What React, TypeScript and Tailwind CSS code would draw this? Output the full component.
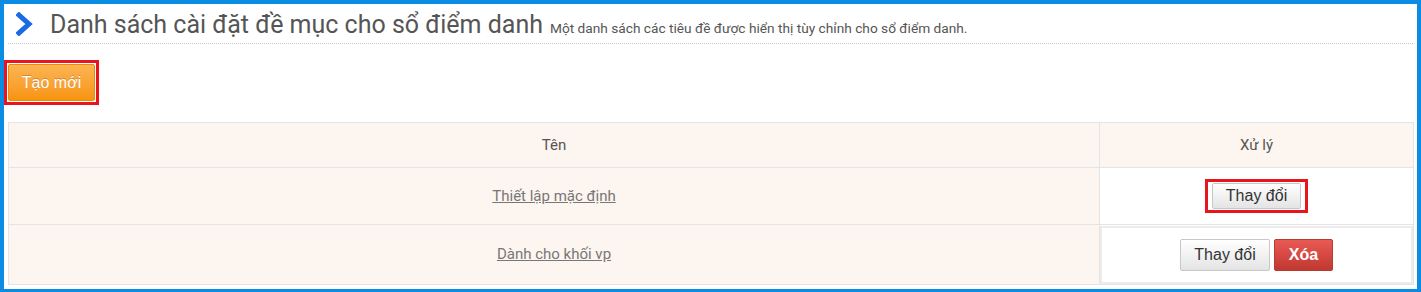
import React from 'react';

function Chevron() {
  return (
    <svg width="18" height="24" viewBox="0 0 18 24" className="shrink-0">
      <polyline points="3,3 13,12 3,21" fill="none" stroke="#1a6ae6" strokeWidth="5" strokeLinecap="square" strokeLinejoin="miter" />
    </svg>
  );
}

const grayBtn =
  'whitespace-nowrap px-0 border border-[#c8c8c8] rounded-[2px] bg-gradient-to-b from-white to-[#e4e4e4] text-[#333] text-[16px] font-["Liberation_Sans",Arial,sans-serif] shadow-[inset_0_1px_0_rgba(255,255,255,0.6)]';

export default function App() {
  return (
    <div className="w-[1421px] h-[292px] bg-white border-t-4 border-l-4 border-r-4 border-b-[3px] border-[#0a8ce2] overflow-hidden font-['Roboto',sans-serif] text-[#555]">
      {/* Title */}
      <div className="mx-1 h-[40px] flex items-center border-b border-dotted border-[#c8c8c8]">
        <div className="pl-[8px] pr-[16px] pt-[1px]">
          <Chevron />
        </div>
        <div className="flex items-baseline gap-[7px] pt-[1px]">
          <span className="text-[25px] leading-none text-[#555]">Danh sách cài đặt đề mục cho sổ điểm danh</span>
          <span className="text-[13.7px] leading-none text-[#555]">Một danh sách các tiêu đề được hiển thị tùy chỉnh cho sổ điểm danh.</span>
        </div>
      </div>

      {/* Create button */}
      <div className="pt-[16px] pb-[17px]">
        <div className="inline-flex border-[3px] border-[#e8151c] p-px">
          <button className="w-[87px] h-[37px] whitespace-nowrap rounded-[2px] border border-[#e38d13] bg-gradient-to-b from-[#fbb450] to-[#f89406] text-white text-[16px] font-['Liberation_Sans',Arial,sans-serif] [text-shadow:0_-1px_0_rgba(0,0,0,0.2)]">
            Tạo mới
          </button>
        </div>
      </div>

      {/* Table */}
      <div className="mx-1 mr-[3px]">
        <table className="w-full border-collapse border border-[#e4e4e4] text-[15px]">
          <thead>
            <tr className="h-[45px] bg-[#fdf5ef]">
              <th className="font-normal border border-[#e4e4e4] text-[#555]">Tên</th>
              <th className="w-[314px] font-normal border border-[#e4e4e4] text-[#555]">Xử lý</th>
            </tr>
          </thead>
          <tbody>
            <tr className="h-[57px]">
              <td className="bg-[#fdf5ef] border border-[#e4e4e4] text-center">
                <a href="#" className="underline text-[15px] text-[#777]">Thiết lập mặc định</a>
              </td>
              <td className="bg-white border border-[#e4e4e4] text-center">
                <div className="inline-flex border-[3px] border-[#e8151c] px-[4px] py-px">
                  <button className={grayBtn + ' h-[26px] w-[89px]'}>Thay đổi</button>
                </div>
              </td>
            </tr>
            <tr className="h-[60px]">
              <td className="bg-[#fdf5ef] border border-[#e4e4e4] text-center">
                <a href="#" className="underline text-[15px] text-[#777]">Dành cho khối vp</a>
              </td>
              <td className="bg-white border border-[#e4e4e4] p-0">
                <div className="h-[58px] border-2 border-[#ececec] flex items-center justify-center gap-[4px]">
                  <button className={grayBtn + ' h-[32px] w-[90px]'}>Thay đổi</button>
                  <button className="h-[32px] w-[59px] whitespace-nowrap rounded-[2px] border border-[#b83a34] bg-gradient-to-b from-[#ea5a55] to-[#c0382f] text-white text-[16px] font-bold font-['Liberation_Sans',Arial,sans-serif]">
                    Xóa
                  </button>
                </div>
              </td>
            </tr>
          </tbody>
        </table>
      </div>
    </div>
  );
}
